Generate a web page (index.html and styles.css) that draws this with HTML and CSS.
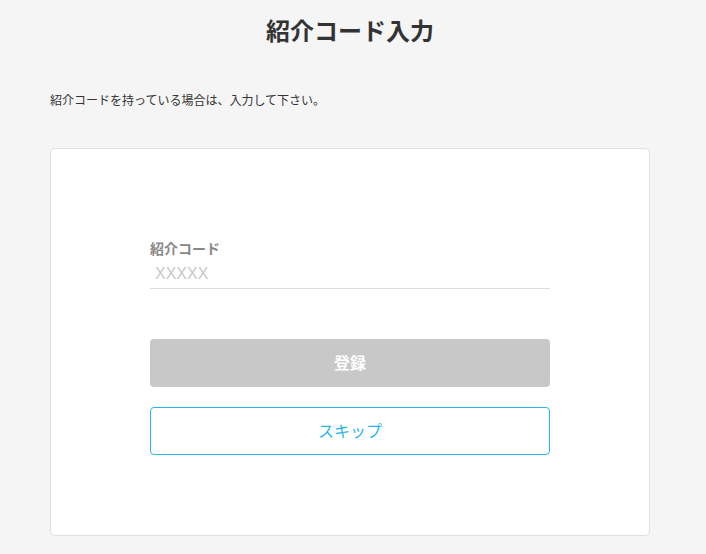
FILE: index.html
```html
<!DOCTYPE html>
<html lang="ja">
<head>
<meta charset="utf-8">
<title>紹介コード入力</title>
<link rel="stylesheet" href="styles.css">
</head>
<body>
<main class="page">
  <h1 class="title">紹介コード入力</h1>
  <p class="lead">紹介コードを持っている場合は、入力して下さい。</p>
  <section class="card">
    <form class="form">
      <label class="label" for="code">紹介コード</label>
      <input class="input" id="code" type="text" placeholder="XXXXX">
      <button class="btn btn-submit" type="button">登録</button>
      <button class="btn btn-skip" type="button">スキップ</button>
    </form>
  </section>
</main>
</body>
</html>
```

FILE: styles.css
```css
html, body {
  margin: 0;
  padding: 0;
  background: #f5f5f5;
}
body {
  font-family: "Noto Sans CJK JP", "Noto Sans", sans-serif;
  color: #333;
}
.page {
  width: 600px;
  margin-left: 50px;
  display: flex;
  flex-direction: column;
}
.title {
  margin: 13px 0 0;
  font-size: 24px;
  line-height: 34px;
  font-weight: 700;
  text-align: center;
  color: #333;
}
.lead {
  margin: 44px 0 0;
  font-size: 12px;
  line-height: 18px;
  color: #333;
}
.card {
  margin-top: 39px;
  background: #fff;
  border: 1px solid #e0e0e0;
  border-radius: 5px;
  box-sizing: border-box;
  height: 388px;
  display: flex;
  justify-content: center;
}
.form {
  width: 400px;
  padding-top: 89px;
  display: flex;
  flex-direction: column;
}
.label {
  font-size: 14px;
  line-height: 20px;
  font-weight: 700;
  color: #888;
}
.input {
  margin: 0;
  border: none;
  border-bottom: 1px solid #ddd;
  outline: none;
  padding: 5px 0 3px 5px;
  font-family: "Liberation Sans", Arial, sans-serif;
  font-size: 16px;
  line-height: 22px;
  color: #333;
  background: transparent;
}
.input::placeholder {
  color: #c8c8c8;
}
.btn {
  height: 48px;
  padding: 0 0 3px;
  border-radius: 4px;
  font-family: "Noto Sans CJK JP", "Noto Sans", sans-serif;
  font-size: 16px;
  cursor: pointer;
  box-sizing: border-box;
}
.btn-submit {
  margin-top: 50px;
  background: #c8c8c8;
  border: none;
  color: #fff;
  font-weight: 700;
}
.btn-skip {
  margin-top: 20px;
  background: #fff;
  border: 1px solid #29b6ec;
  color: #29b6ec;
  font-weight: 400;
}
```
